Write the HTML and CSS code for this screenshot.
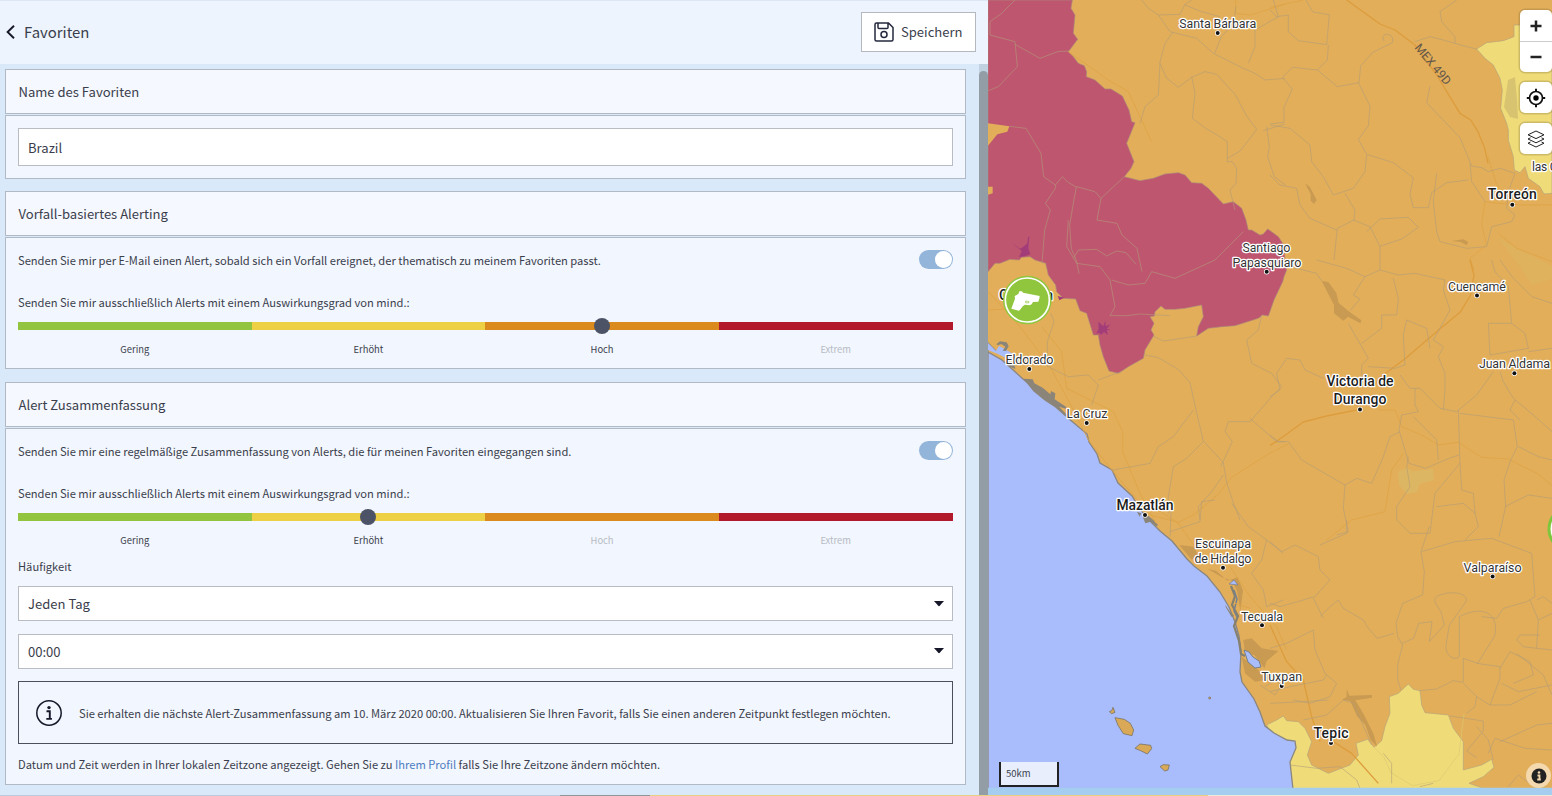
FILE: index.html
```html
<!DOCTYPE html>
<html lang="de">
<head>
<meta charset="utf-8">
<title>Favoriten</title>
<link rel="stylesheet" href="styles.css">
</head>
<body>
<div class="app">
  <main class="panel">
    <header class="topbar">
      <a class="back"><svg width="10" height="16" viewBox="0 0 10 16"><path d="M8 1.700 1.600 8l6.400 6.300" fill="none" stroke="#16182a" stroke-width="1.900"/></svg><span>Favoriten</span></a>
      <button class="save"><svg width="20" height="20" viewBox="0 0 20 20" fill="none" stroke="#25283d" stroke-width="1.5"><path d="M2.500 1h12L19 5.500v12a1.500 1.500 0 0 1-1.500 1.500h-15A1.500 1.500 0 0 1 1 17.500v-15A1.500 1.500 0 0 1 2.500 1ZM4 1v4.500a1 1 0 0 0 1 1h8a1 1 0 0 0 1-1V1"/><circle cx="10" cy="12.500" r="3"/></svg><span>Speichern</span></button>
    </header>
    <div class="body">
      <div class="cards">
        <section class="card first">
          <h2>Name des Favoriten</h2>
          <div class="content"><div class="field name">Brazil</div></div>
        </section>
        <section class="card second">
          <h2>Vorfall-basiertes Alerting</h2>
          <div class="content">
            <div class="row"><span>Senden Sie mir per E-Mail einen Alert, sobald sich ein Vorfall ereignet, der thematisch zu meinem Favoriten passt.</span><i class="toggle"></i></div>
            <p class="hint">Senden Sie mir ausschließlich Alerts mit einem Auswirkungsgrad von mind.:</p>
            <div class="scale"><i class="g"></i><i class="y"></i><i class="o knob"></i><i class="r"></i></div>
            <div class="labels"><span>Gering</span><span>Erhöht</span><span>Hoch</span><span class="off">Extrem</span></div>
          </div>
        </section>
        <section class="card third">
          <h2>Alert Zusammenfassung</h2>
          <div class="content">
            <div class="row"><span>Senden Sie mir eine regelmäßige Zusammenfassung von Alerts, die für meinen Favoriten eingegangen sind.</span><i class="toggle"></i></div>
            <p class="hint">Senden Sie mir ausschließlich Alerts mit einem Auswirkungsgrad von mind.:</p>
            <div class="scale"><i class="g"></i><i class="y knob"></i><i class="o"></i><i class="r"></i></div>
            <div class="labels"><span>Gering</span><span>Erhöht</span><span class="off">Hoch</span><span class="off">Extrem</span></div>
            <p class="freq">Häufigkeit</p>
            <div class="field select">Jeden Tag<svg width="10" height="6" viewBox="0 0 10 6"><path d="M0 0h10Q9 1 5.800 4.800 5 5.600 4.200 4.800 1 1 0 0" fill="#16182a"/></svg></div>
            <div class="field select">00:00<svg width="10" height="6" viewBox="0 0 10 6"><path d="M0 0h10Q9 1 5.800 4.800 5 5.600 4.200 4.800 1 1 0 0" fill="#16182a"/></svg></div>
            <div class="info"><svg width="26" height="26" viewBox="0 0 26 26"><circle cx="13" cy="13" r="12.200" fill="none" stroke="#16182a" stroke-width="1.500"/><circle cx="13" cy="7.600" r="1.700" fill="#16182a"/><path d="M10.500 11.300h3.300v7.200M10.300 18.900h5.600" fill="none" stroke="#16182a" stroke-width="1.900"/></svg><span>Sie erhalten die nächste Alert-Zusammenfassung am 10. März 2020 00:00. Aktualisieren Sie Ihren Favorit, falls Sie einen anderen Zeitpunkt festlegen möchten.</span></div>
            <p class="zone">Datum und Zeit werden in Ihrer lokalen Zeitzone angezeigt. Gehen Sie zu <a>Ihrem Profil</a> falls Sie Ihre Zeitzone ändern möchten.</p>
          </div>
        </section>
      </div>
      <div class="scrollbar"></div>
    </div>
    <div class="sliver"></div>
  </main>
  <aside class="map">
    <svg class="canvas" width="564" height="796" viewBox="988 0 564 796">
      <rect x="988" y="0" width="564" height="796" fill="#e2ae5a"/>
      <!-- level areas -->
      <path class="red" transform="translate(985 0) scale(.33333)" d="M9 0H262L258 25 270 45 265 100 278 118 250 155 265 170 280 190 298 197 305 215 304 230 330 240 360 267 378 267 412 288 432 330 440 365 450 368 425 430 447 485 438 505 418 530 465 542 505 535 540 522 580 518 600 525 620 548 650 550 670 565 715 612 745 605 770 625 783 660 790 690 800 690 825 705 835 702 848 687 862 697 880 710 895 733 898 752 900 785 905 810 897 830 893 845 867 900 850 948 833 945 820 955 750 977 710 980 670 985 635 1008 640 980 655 950 650 915 600 925 570 928 540 928 528 918 510 935 508 948 495 950 507 970 498 990 507 1005 480 1050 475 1075 430 1100 400 1120 372 1113 355 1070 345 1035 340 1005 325 1005 305 940 285 932 272 897 235 895 215 875 212 855 190 825 182 790 150 780 135 770 110 772 103 780 75 778 45 790 30 790 9 815Z"/>
      <path class="area" transform="translate(985 0) scale(.33333)" d="M9 370l64 9-6 16-30 8-28 34zM9 560h14v20l-14 4z"/>
      <path class="yellow" transform="translate(1270 0) scale(.33333)" d="M846 75H732V110L700 122 650 128 620 147 645 175 670 195 690 235 697 270 692 325 710 370 715 390 715 420 730 470 733 510 750 518 765 500 775 535 810 560 822 582 846 580Z"/>
      <path class="yellow" transform="translate(1270 520) scale(.33333)" d="M-10 615L20 600 40 588 50 602 85 605 105 625 125 665 112 705 125 735 175 760 240 735 265 705 258 670 293 658 312 682 335 662 345 620 360 580 358 530 385 520 415 492 430 508 450 512 455 555 465 578 535 585 550 625 580 665 580 750 635 735 665 718 672 742 640 770 597 790 635 803V806H0V635Z"/>
      <path class="sea" d="M988 343l7 7-7-1v3l14 8 21 19 12 10 17 12 16 17 19 16 2 8 8 12 3 9 12 7 6 13 14 13 8 13 8 10 12 12 12 10 15 18 7 7 13 10 13 16 9 15 6 15 4 14 2 16-1 20 2 10 12 17 6 13 5 14 9 7 13 7 8 1 1 7-6 14 3 27H988Z"/>
      <!-- lagoons and terrain -->
      <path d="M988 343l8 8 3-5 6 3 8 5 3 8-6-2-12-6-10-4z" fill="#a9bcfb"/>
      <g fill="#8a8578">
        <path transform="translate(985 220) scale(.33333)" d="M35 372l10-8 20 3 6 12-8 14-10-1 8-12-12-8-12 4zM70 430l18 2 3 15-20-8zM115 476l28 2 5 12 25 13 23 20 2-10 13 7-2 18 35 23-2 5-20-6 24 24-6 4-30-26-30-20-35-28z"/>
        <path transform="translate(985 500) scale(.33333)" d="M456 35l13 5-5 10zM473 50l18-2 14 12 14 15-4 4-18-14-16 5zM721 315l14 20 12 12-7 4-18-30z"/>
      </g>
      <path d="M1231 586l4 10-3 9 6 11-4 10 5 15 2 13 4 2" fill="none" stroke="#86806f" stroke-width="2.200"/>
      <path d="M1234 590l3 9-3 12 3 6" fill="none" stroke="#77808c" stroke-width="1.500"/>
      <g fill="#c99a52">
        <path transform="translate(985 500) scale(.33333)" d="M583 135l45 5 10 25-18 14zM668 207l25 5 35 30 30-10 16 40-8 60-10-60-15-30-30-10zM775 420l25-5 30 30 50 8-35 30-7 22-30-40-28-5zM770 470l50 40 20 30-30 5-30-25z"/>
        <path transform="translate(1270 260) scale(.33333)" d="M155 63l20 3 24 33 7 30 30 25 38 27-3 9-37-20-14 12-28-22v-25z"/>
        <path transform="translate(1270 0) scale(.33333)" d="M105 550l15 12 20 38-8 12-10-10v-20zM545 723l35-5 15 8-5 10-18-10z"/>
        <path transform="translate(1270 520) scale(.33333)" d="M230 507l8 20 68-2v8l-50 8 25 42 30 60 10 37-20-22-15-43-25-27-20-45-25-4 14-8z"/>
      </g>
      <path transform="translate(985 220) scale(.33333)" fill="#a33d79" d="M80 68l25 18 10-6 12-10 2-20 4 0-3 35 6 18-18 6-16 2 8-18zM218 228l20 5-15 8zM340 305l15 14 6-18 1 18 15-7-12 14 12 3-12 2 4 15-12-10-8 8-7-6-8 3 7-14z"/>
      <g fill="#d8c470"><path d="M1508 80l7-3 2 22 1 20-8-2-6-10z"/><path d="M1398 472l8-4 7 3 20-2 1 11-14 4-3 8-10 2-8-9z" opacity=".4"/><path d="M1498 238l15 8 39 20v13l-20 6-12-18z" opacity=".2"/></g>
      <!-- islands -->
      <g fill="#d9a957" stroke="#7b7668" stroke-width="2.500" transform="translate(985 500) scale(.33333)"><path d="M373 635l7-3 4-10 6 15-10 4zM390 653l28 5 18 12 10 20-5 17-26-6-16-25zM450 745l15-13 32 4 3 10-13 16-20-10zM525 800l10-6 18 1-4 15-10 3z"/><circle cx="674" cy="594" r="3"/></g>
      <path d="M1244 650l5 2 4 5 6 4 2 6-6 1-7-6z" fill="#a9bcfb" stroke="#77808c"/>
      <path d="M1229 584l5-4 4 5z" fill="#a9bcfb" stroke="#77808c" stroke-width=".7"/>
      <!-- roads -->
      <g class="roads">
        <path transform="translate(985 0) scale(.33333)" d="M752 0v40l45 5 105-33M250 155l120 85 60 35 42 90 28 60"/>
        <path class="major" transform="translate(1270 0) scale(.33333)" d="M230 0l100 72 45 18 60 45 65 90 70 115 32 20 22 35 20 50 10 45"/>
        <path transform="translate(1270 0) scale(.33333)" d="M654 470l25 80 35 60M846 615H750L680 610 645 605 635 675 650 735 600 775 612 810M0 22L100 0M685 700l55 45 106 40"/>
        <path transform="translate(985 220) scale(.33333)" d="M10 215l95 105 90 120 60 110 55 110 70 90 60 70 55 65 85 22 50-25 70-60 40-50 110-70 60-30M10 270l100-5M170 320l60 75 15 110 140 70 28 60v60l50 120 50 95"/>
        <path class="major" transform="translate(1270 260) scale(.33333)" d="M600 0l12 45-10 60-30 50-60 50-105 90-80 60-20 30M260 450l-90 18-70 18-80 58-20 12"/>
        <path transform="translate(1270 260) scale(.33333)" d="M325 450h50l20 50 60 25 50 30 60-8 70 45 80 5 90 45 41 35M400 580l-35 50-20 125-100 25-75 60"/>
        <path transform="translate(985 500) scale(.33333)" d="M490 10l90 60 50 70M735 200l60 90 80 90 30 70M750 310l45 15"/>
        <path class="major" transform="translate(1270 520) scale(.33333)" d="M0 315l50 110 50 55 25 110 25 75M185 662l60 38 80 90"/>
        <path class="thin" transform="translate(1270 520) scale(.33333)" d="M312 682l30 30 20 45 65 40 80-15 60-80 15-120"/>
      </g>
      <!-- district borders -->
      <g class="borders">
        <path transform="translate(985 0) scale(.33333)" d="M90 0L50 40 15 65V105L90 125 97 200 40 260 10 272M90 133l75 42 53-20 32-2M73 379l50 6 45 75 8 70 35 25 22-25 16 17 25 14-10 55-10 60 5 70 15 35 8 40M211 555v10l-30 45 15 20-17 60-8 100M275 560l55 15 18 20 70-65M348 595l-12 65 60 10 15 35 45 40 15 70M265 775l15-25 55-2 30 20 30-15 28 5 30 35M470 0l20 25 30 20 35 50 80 20 50 45 90 45 35 15 30 20 60-5M520 45l65-2 15-30 20-13M600 15l50 20 55 15M565 95l-25 35-15 55-3 70-2 30-40 35-15 50M525 190l20 45 35 27 40-30 40-17 35 8 55 60 35 65 30 40-30 40-20 25-37 22M620 230l10 50-8 75 40 30 35 20 30 20v60h15l13 20-2 45-18 20 15 60M752 20l-5 50-38 40-20 50M835 392l65-20M845 380l8 60-5 30 20 60 33 25M865 0l15 50-70 40v50l-20 50"/>
        <path transform="translate(1270 0) scale(.33333)" d="M0 30l20 20 35-5v50l30 27 85 12 8-90-50-8-20-36M175 135l-3 45-30 30-75-8-30 30 30 35-25 55v45l-42 5M142 210l60 50 65-12 5-50 35-40 60-30c10-30-40-35-25-5M435 125l45-15 40 10 70 20 30 7M560 0l-50 35 5 30 40 45v20M265 248l35 70-5 60-30 40 25 45 80 25 60 45-10 50 10 40 45 0 10-45 45-30 65-8M290 465l-5 50-35 50-60 20-30-55-35-45-5-50-60-50-60-10M225 580l30 50-3 30-50 25-10 95M0 525l30 30 50 10 10 50 30 40 80 35M250 660l50 20 30 60v70M290 695l40-38 85-5 30 30-50 35-65 22M490 605l10 90 10 30 80 20 60-5 15-60 60-15 10-20-25-20 5-50 20-55-45-15-35 10-20-12-30-5-35-85-100-105 10-50M600 490l5 55 40 60M500 520l-10 85"/>
        <path transform="translate(985 220) scale(.33333)" d="M250 0l-5 80 30 50 70 10 30 40 15 80-15 27 50 0 40-5 90 5M380 180l50 15 50-5 20-35 70 20 120-55 85-85M187 440v-75l20-60-10-25M190 440l60 30 60-5 30 30-20 60M340 480l40-15 30-10M505 348l30 15 70-10 30-5M480 405l40 8 60 35 35 40 20 90 20 85 60 65 10 60 20 60 20 52M625 570l-60 80-45 30-25 50-110 20M655 665l-50 50-40 25-15 90v50M830 285l-10 45-35 30 15 70 60 30 30 40-30 30-65 75-65 0-10 30 22 30-35 75M795 595l80 70h25M715 765l-35 50-40 45 5 40"/>
        <path transform="translate(1270 260) scale(.33333)" d="M60 20l80 20 15 23M140 0l90 25 55 25 45-20 55 15 50-5 90 20-5 30 20 60-50 90 30 20-15 30 20 50v50l-5 60M285 50l-35 55 20 12-30 35M235 190l60 105-20 20v35M275 250l60-45v-40l45 0 5-50-15-60M0 410l30-20-10-50 30-45 40 5 15 30 55 25M295 320l80 5 30-10-5-90 10-45 60 25 10 60M390 345l30 40 30 0 60 60 50 10 60-50 50-70M435 385l0 50 10 20-50 10-8 45 30 100 50 15 70-30 30-10M430 470l70 70 5 60M0 525l25 20 30 0 40 55 130 75 35-20 45 15 35-80 20-60 30-15M225 675l-5 70 15 70-35 10M565 450l5 160-75 90-15 120-60 0-40-40 0-40 40-60-10-60 5-30M570 460l160 20 12 80-20 40-20 60 5 80-20 90M570 610l5 80 35 10 5 60 10 40-40 40M500 740l80-10 35 30M705 740l70-35 71 10M745 560l60 30 41 10M690 335l10 30 30 50 60 50 56 50M735 420l-15 30 30 30M655 190l5 95 115-20-10-45-40-30zM665 0l10 35 40 45 10 110M775 275l71-10M846 130l-60-20-60-60L690 0"/>
        <path transform="translate(985 500) scale(.33333)" d="M560 0l-5 110M555 95l90-30 5-60 40-5M740 10l50 70 55 40 50 40M845 120l-15 60-30 40 35 50 10 50 50-20M840 560l30-20 20 15-20 30-45-30"/>
        <path transform="translate(1270 520) scale(.33333)" d="M0 65l35 30 40-20 70 35 5 40 30 30-50 55 30 60M150 75l80-35V0M0 250l30 10 70-20 30-10M150 290l30-30 25-20 15 25 60 35 15 25 27 30 50-15M378 310l20-60 60-25 5-70-10-60 25-75M378 310l5 40 15 25-15 60v45l10 30M130 330l5 60 30 70 35 30-20 40-60 20-50-10M0 385l50-15 80-40M0 515l60-15 100-20 10-15M0 550l100-5 75-5M100 600l70-15 50-45 30 10 55 125M455 95l100-30 110-10 120 45 10 130-25 15-70 20-20 30-45-5M568 290v115c0 20-45 10-40-30l10-60 50-70c10-25-40-30-60-25-45 10-40 20-15 55l10 40-45 50 8-60-40 5-15 45-35 15M568 290c90-45 120 10 105 60l-50 80-43-15v70M450 512l50-5 50-25 30 5M580 490l40 40 40 25 30-80 0-35-70-10M690 445l30-50 60 30 10 40-60 25M620 530l-5 30-25 20M695 490l50 25 101-20M660 555l60 0 80-40M540 588l100 15 0 30-50 60 30 20M670 720l-15-60-35-40M690 665l110-50 46-5M655 700l20-45 90 30 80 5M715 800l30-35 40 30M780 240l25 60-5 85-40-5-20-20 10-15 60 0M800 240l20-10 26 20M805 300l41-20M800 385l46 5M740 400l80 65 26 60M60 735l80 10 70-5 50 40 10 25M340 700l25 30 0 60M450 800l40-10"/>
      </g>
      <!-- place names -->
      <g class="places">
        <g class="dots"><circle cx="1217.700" cy="33" r="2"/><circle cx="1512.300" cy="204.700" r="2"/><circle cx="1266.700" cy="271.700" r="2"/><circle cx="1477" cy="295.400" r="2"/><circle cx="1514.400" cy="373.300" r="2"/><circle cx="1360" cy="409.500" r="2"/><circle cx="1029.300" cy="369" r="2"/><circle cx="1086.700" cy="423" r="2"/><circle cx="1145" cy="515" r="2"/><circle cx="1223" cy="567.700" r="2"/><circle cx="1262" cy="625.300" r="2"/><circle cx="1281.700" cy="686" r="2"/><circle cx="1331" cy="743" r="2"/><circle cx="1492.600" cy="576.500" r="2"/></g>
        <text x="1217.700" y="28" textLength="77">Santa Bárbara</text>
        <text x="1266.500" y="252" textLength="48">Santiago</text>
        <text x="1267" y="267" textLength="69">Papasquiaro</text>
        <text x="1477" y="290.500" textLength="58">Cuencamé</text>
        <text x="1514.500" y="368" textLength="71">Juan Aldama</text>
        <text x="1029.500" y="364" textLength="48">Eldorado</text>
        <text x="1087" y="418" textLength="41">La Cruz</text>
        <text x="1223" y="548" textLength="56">Escuinapa</text>
        <text x="1223" y="563" textLength="57">de Hidalgo</text>
        <text x="1262" y="620.500" textLength="42">Tecuala</text>
        <text x="1281.700" y="681" textLength="41">Tuxpan</text>
        <text x="1492.600" y="571.500" textLength="58">Valparaíso</text>
        <text x="1532" y="170.500" class="start">las C</text>
        <text x="1512.300" y="199" class="big" textLength="49">Torreón</text>
        <text x="1360" y="386" class="big" textLength="67">Victoria de</text>
        <text x="1360" y="403.500" class="big" textLength="53">Durango</text>
        <text x="1145" y="509.500" class="big" textLength="57">Mazatlán</text>
        <text x="1331" y="737.500" class="big" textLength="35">Tepic</text>
        <text x="1026" y="299.500" class="big" textLength="54">Culiacán</text>
        <text class="road" transform="translate(1414 48) rotate(50)">MEX 49D</text>
      </g>
      <g transform="translate(985 220) scale(.33333)"><circle cx="127" cy="240" r="73" fill="#8fc63d"/><circle cx="127" cy="240" r="66" fill="none" stroke="#fff" stroke-width="5"/><path d="M100 222l3-8 8 0 3 4 50 10-1 8-3 9-16 1-4 7-6 3-14-2-6 4-10 13-3 1-22-6 11-30-1-8z" fill="#fff"/><path d="M122 243l10 2-1 4-9-1z" fill="none" stroke="#8fc63d" stroke-width="2"/></g>
      <circle cx="1571" cy="529" r="22" fill="#fff" stroke="#7fc63d" stroke-width="3"/>
      <path d="M988 787.700h564v7.300H988z" fill="#a5cdf0"/><path d="M988 795h220v1H988z" fill="#e8cf83"/><path d="M1208 795h344v1h-344z" fill="#efe9d9"/>
    </svg>
    <div class="controls">
      <div class="zoom"><b><svg width="12" height="12"><path d="M6 .5v11M.5 6h11" stroke="#222" stroke-width="2.500"/></svg></b><b><svg width="12" height="12"><path d="M.5 6h11" stroke="#222" stroke-width="2.500"/></svg></b></div>
      <b class="ctl"><svg width="20" height="20" viewBox="0 0 20 20"><circle cx="10" cy="10" r="6.500" fill="none" stroke="#111" stroke-width="1.700"/><circle cx="10" cy="10" r="2.700"/><path d="M10 .8v3M10 16.200v3M.8 10h3M16.200 10h3" stroke="#111" stroke-width="2"/></svg></b>
      <b class="ctl"><svg width="18" height="18" viewBox="0 0 18 18" fill="none" stroke="#222" stroke-width="1"><path d="M9 1l8 3.800-8 3.800-8-3.800zM3.500 7.800L1 9l8 3.800L17 9l-2.500-1.200M3.500 12L1 13.200 9 17l8-3.800-2.500-1.200"/></svg></b>
    </div>
    <div class="km">50km</div>
    <div class="about"><svg width="16" height="16"><circle cx="8" cy="8" r="7.500" fill="#222"/><circle cx="8" cy="4.500" r="1.300" fill="#f4d8ae"/><path d="M6.500 7.500h2v4M6.200 11.500h3.600" stroke="#f4d8ae" stroke-width="1.800" fill="none"/></svg></div>
  </aside>
</div>
</body>
</html>
```
FILE: styles.css
```css
* { box-sizing: border-box; }
body { margin: 0; font-family: "Noto Sans CJK SC", "Open Sans", sans-serif; color: #3a3e4c; }
.app { display: grid; grid-template-columns: 988px 564px; width: 1552px; height: 796px; overflow: hidden; }
.panel { display: flex; flex-direction: column; height: 796px; background: #d9e9f9; }
.topbar { display: flex; justify-content: space-between; align-items: center; height: 64px; flex: none; padding: 0 12px 2px 6px; background: #edf4fd; border-top: 1px solid #dde7f3; }
.back { display: flex; align-items: center; gap: 8px; font-size: 14.900px; line-height: 20px; }
.save { display: flex; align-items: center; justify-content: flex-start; gap: 7px; width: 115px; height: 40px; padding: 0 0 0 12px; border: 1px solid #b4b8bf; background: #fff; font: 13.050px/20px "Noto Sans CJK SC", sans-serif; color: #3a3e4c; }
.body { display: flex; flex: 1; justify-content: space-between; min-height: 0; }
.cards { width: 966px; padding: 5px 0 0 5px; }
.card { display: flex; flex-direction: column; gap: 1px; margin-bottom: 12px; }
.card.second { margin-bottom: 12.500px; }
.card h2 { height: 45px; margin: 0; padding-left: 12.500px; border: 1px solid #b1bac4; background: #f5f8fe; font-size: 13.050px; font-weight: 400; line-height: 43px; }
.content { padding: 0 12.500px 0 12px; border: 1px solid #b1bac4; background: #f2f6fe; font-size: 11.150px; }
.first .content { height: 64px; padding-top: 12px; }
.second .content { height: 132px; }
.third { gap: 1.500px; }
.third .content { height: 357px; }
.field { display: flex; align-items: center; justify-content: space-between; height: 35px; padding: 0 8px 0 9px; border: 1px solid #b9bcc2; background: #fff; font-size: 13.050px; }
.field.name { height: 38px; }
.select { margin-bottom: 12.600px; }
.row { display: flex; align-items: center; justify-content: space-between; height: 43px; }
.toggle { display: block; width: 34px; height: 19px; padding: 1px; border-radius: 10px; background: #94b5da; }
.toggle::after { content: ""; display: block; width: 17px; height: 17px; margin-left: auto; border-radius: 50%; background: #fff; }
.hint { height: 20px; margin: 11px 0 10px; line-height: 20px; }
.scale { display: grid; grid-template: 8px / repeat(4, 1fr); height: 8px; }
.scale i { display: flex; align-items: center; justify-content: center; min-height: 0; height: 8px; }
.g { background: #92c440; } .y { background: #edd044; } .o { background: #db8b1d; } .r { background: #b21a2c; }
.knob::after { content: ""; flex: none; width: 16px; height: 16px; border-radius: 50%; background: #4d5366; }
.labels { display: grid; grid-template-columns: repeat(4, 1fr); height: 20px; margin-top: 9px; line-height: 20px; font-size: 9.400px; text-align: center; }
.off { color: #b6bbc4; }
.freq { height: 20px; margin: 6px 0 10px; line-height: 20px; }
.info { display: flex; align-items: center; gap: 17px; height: 63px; padding-left: 17px; border: 1px solid #4c505e; }
.zone { height: 20px; margin: 10px 0 0; line-height: 20px; }
.zone a { color: #4d7cc0; }
.scrollbar { width: 9.500px; background: #c0d2e1; padding-top: 7px; }
.scrollbar::after { content: ""; display: block; height: 100%; border-radius: 5px 5px 0 0; background: #929da6; }
.sliver { height: 1px; flex: none; background: linear-gradient(90deg, #b9cbdc 0 560px, #8f9598 560px 650px, #e8cf83 650px); }
.map { position: relative; height: 796px; overflow: hidden; font-family: Roboto, sans-serif; }
.canvas { display: block; }
.red { fill: #bf5670; stroke: #a98a7a; stroke-width: 2; }
.yellow { fill: #efdc79; stroke: #b5a47c; stroke-width: 2; }
.area { fill: #e2ae5a; }
.sea { fill: #a9bcfb; stroke: #8a8680; stroke-width: 1.300; }
.roads path { fill: none; stroke: #dfa346; stroke-width: 2.500; stroke-linejoin: round; }
.roads .major { stroke: #dd9d3d; stroke-width: 4; }
.roads .thin { stroke: #dcc86f; stroke-width: 2; }
.borders path { fill: none; stroke: #b09b78; stroke-opacity: .8; stroke-width: 2.200; stroke-linejoin: round; }
.dots circle { fill: #111; stroke: #fff; stroke-width: 1.500; paint-order: stroke; }
.places text { font-size: 12.500px; text-anchor: middle; fill: #333; stroke: #fff; stroke-width: 2.600px; stroke-linejoin: round; paint-order: stroke; }
.places .big { font-size: 14px; font-weight: 500; fill: #1d1d1d; }
.places .start { text-anchor: start; font-size: 12px; letter-spacing: -.2px; }
.places .road { text-anchor: start; stroke: none; fill: #65584a; font-size: 12px; }
.controls { position: absolute; top: 10px; left: 531.500px; display: flex; flex-direction: column; gap: 10px; }
.controls b { display: flex; align-items: center; justify-content: center; width: 32px; height: 31px; }
.zoom, .controls .ctl { background: #fff; border-radius: 5px; box-shadow: 0 0 0 1.500px rgba(120, 100, 50, .28); }
.zoom b + b { border-top: 1px solid #ccc; }
.km { position: absolute; left: 11px; top: 762px; width: 60px; height: 25px; padding-left: 5px; border: 2px solid #222; border-top: 0; background: #e8eefc; font: 9.500px/22px "Noto Sans CJK SC", sans-serif; }
.about { position: absolute; left: 538px; top: 763px; display: flex; align-items: center; justify-content: center; width: 25px; height: 25px; border-radius: 50%; background: #f4d8ae; }
```
